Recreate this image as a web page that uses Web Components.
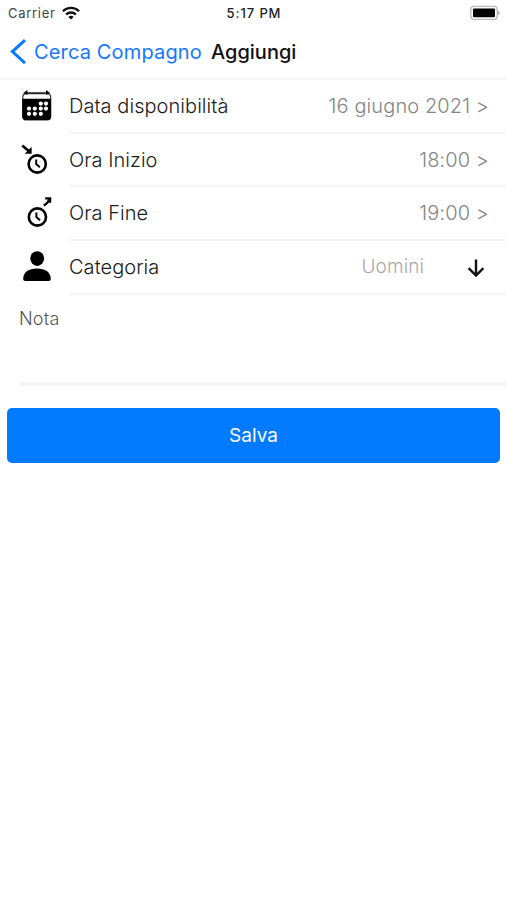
<!DOCTYPE html>
<html lang="it">
<head>
    <meta charset="utf-8">
    <title>Aggiungi</title>
    <style>
        body {
            margin: 0;
            background: #fff;
            color: #202020;
            font-family: Inter, "Liberation Sans", sans-serif;
            font-feature-settings: "calt" 0;
        }
    </style>
</head>
<body>
    <add-page></add-page>

    <script>
        class StatusBar extends HTMLElement {
            constructor() {
                super();
                this.shadowDOM = this.attachShadow({ mode: "open" });
            }

            connectedCallback() {
                this.render();
            }

            render() {
                this.shadowDOM.innerHTML = `
                    <style>
                        :host {
                            display: grid;
                            grid-template-columns: 1fr auto 1fr;
                            align-items: center;
                            height: 26px;
                            padding: 0 6px 0 8px;
                            font-size: 13px;
                            line-height: 26px;
                        }

                        .carrier {
                            display: flex;
                            align-items: center;
                            gap: 6px;
                            color: #444;
                            letter-spacing: 0.7px;
                        }

                        .time {
                            font-weight: 500;
                            color: #222;
                            letter-spacing: 0.9px;
                        }

                        .battery {
                            justify-self: end;
                        }

                        svg {
                            display: block;
                        }
                    </style>

                    <div class="carrier">
                        <span>Carrier</span>
                        <svg width="18" height="14" viewBox="0 0 18 14" fill="none" stroke="#111" stroke-width="2.3">
                            <path d="M.9 5.2a11.6 11.6 0 0 1 16.2 0M4 8.5a7.3 7.3 0 0 1 10 0" />
                            <path d="M9 13.4 6.3 10.9a4 4 0 0 1 5.4 0z" fill="#111" stroke="none" />
                        </svg>
                    </div>
                    <span class="time">5:17 PM</span>
                    <svg class="battery" width="30" height="16" viewBox="0 0 30 16">
                        <rect x=".8" y="1.4" width="26.4" height="13" rx="3" fill="#fff" stroke="#bbb" stroke-width="1.4" />
                        <rect x="3" y="3.6" width="22" height="8.6" rx="1" fill="#000" />
                        <path d="M28.2 5.6q1.4.5 1.4 2.3t-1.4 2.3z" fill="#aaa" />
                    </svg>
                `;
            }
        }

        class NavBar extends HTMLElement {
            constructor() {
                super();
                this.shadowDOM = this.attachShadow({ mode: "open" });
            }

            connectedCallback() {
                this.render();
            }

            render() {
                this.shadowDOM.innerHTML = `
                    <style>
                        :host {
                            display: flex;
                            align-items: center;
                            box-sizing: border-box;
                            height: 54px;
                            padding-left: 10px;
                            border-bottom: 2px solid #f6f6f6;
                            font-size: 20px;
                            line-height: 52px;
                            white-space: nowrap;
                        }

                        svg {
                            flex: none;
                            margin-right: 8px;
                        }

                        .back {
                            color: #1677ff;
                            width: 177px;
                            letter-spacing: 0.15px;
                        }

                        .title {
                            color: #111;
                            font-weight: 500;
                            letter-spacing: 0;
                        }
                    </style>

                    <svg width="16" height="26" viewBox="0 0 16 26" fill="none" stroke="#0a78ff" stroke-width="3">
                        <path d="M15 1.2 2.4 12.6 15 24.2" />
                    </svg>
                    <span class="back"><slot name="back"></slot></span>
                    <span class="title"><slot></slot></span>
                `;
            }
        }

        const clock = `
            <circle r="8.6" fill="none" stroke="#000" stroke-width="2.6" />
            <path d="M-1-4.6V0L2.6 3.2" fill="none" stroke="#000" stroke-width="1.9" />
        `;

        // 32x53 drawings, one row high
        const icons = {
            calendar: `
                <rect x="2.8" y="13.6" width="27.8" height="26.4" rx="3.4" fill="none" stroke="#333" stroke-width="1.2" />
                <path d="M2.3 18.8h28.8v17.8a3.4 3.4 0 0 1-3.4 3.4h-22a3.4 3.4 0 0 1-3.4-3.4z" />
                <path d="M5 12.9h23.4" stroke="#222" stroke-width="1.3" />
                <path d="M3.2 12.9 7.4 10v5zM30.2 12.9 26 10v5z" />
                <g fill="#fff">
                    <circle cx="20.8" cy="23.6" r="2.1" /><circle cx="26" cy="23.6" r="2.1" />
                    <circle cx="9" cy="28.6" r="2.1" /><circle cx="14.8" cy="28.6" r="2.1" />
                    <circle cx="20.8" cy="28.6" r="2.1" /><circle cx="26" cy="28.6" r="2.1" />
                    <circle cx="9" cy="33.8" r="2.1" /><circle cx="14.8" cy="33.8" r="2.1" />
                    <circle cx="20.8" cy="33.8" r="2.1" />
                </g>
            `,
            start: `
                <path d="M2.2 11.4 9.6 17.8" fill="none" stroke="#000" stroke-width="2.6" />
                <path d="M11.6 13v6.8H4.6z" />
                <g transform="translate(17.2 30)">${clock}</g>
            `,
            end: `
                <path d="M23.8 18.6q5-3 5.4-7.2M25.2 11.4h4.9v4.4" fill="none" stroke="#000" stroke-width="2.3" />
                <g transform="translate(17.4 30)">${clock}</g>
            `,
            person: `
                <ellipse cx="17.2" cy="17.6" rx="6.9" ry="7.4" />
                <path d="M3.2 38.2C3.2 31 9 27.6 17 27.6s13.8 3.4 13.8 10.6q0 1.8-2 1.8H5.2q-2 0-2-1.8z" />
            `
        };

        class FormRow extends HTMLElement {
            constructor() {
                super();
                this.shadowDOM = this.attachShadow({ mode: "open" });
            }

            connectedCallback() {
                this.render();
            }

            render() {
                this.shadowDOM.innerHTML = `
                    <style>
                        :host {
                            display: flex;
                            height: 53.7px;
                            padding-left: 20px;
                            font-size: 20px;
                            font-weight: 300;
                            line-height: 53px;
                            white-space: nowrap;
                        }

                        .icon {
                            flex: none;
                            margin-right: 17px;
                        }

                        .content {
                            flex: 1;
                            display: flex;
                            justify-content: space-between;
                            box-sizing: border-box;
                            padding-right: 17px;
                            border-bottom: 2px solid #f4f4f4;
                        }

                        .label {
                            letter-spacing: 0.05px;
                        }

                        .value {
                            display: flex;
                            color: #858585;
                            letter-spacing: 0.1px;
                        }
                    </style>

                    <svg class="icon" width="32" height="53" viewBox="0 0 32 53">${icons[this.getAttribute("icon")]}</svg>
                    <div class="content">
                        <span class="label"><slot name="label"></slot></span>
                        <span class="value"><slot></slot></span>
                    </div>
                `;
            }
        }

        class CategoryPicker extends HTMLElement {
            constructor() {
                super();
                this.shadowDOM = this.attachShadow({ mode: "open" });
            }

            connectedCallback() {
                this.render();
            }

            render() {
                this.shadowDOM.innerHTML = `
                    <style>
                        :host {
                            display: flex;
                            align-items: center;
                            gap: 43px;
                            padding-right: 4px;
                            color: #a8a8a8;
                            font-size: 19px;
                        }

                        svg {
                            margin-top: 3px;
                        }
                    </style>

                    <span><slot></slot></span>
                    <svg width="18" height="20" viewBox="0 0 18 20" fill="none" stroke="#111" stroke-width="2.4">
                        <path d="M9 1.6v16M1.6 10.2 9 17.6l7.4-7.4" />
                    </svg>
                `;
            }
        }

        class NoteField extends HTMLElement {
            constructor() {
                super();
                this.shadowDOM = this.attachShadow({ mode: "open" });
            }

            connectedCallback() {
                this.render();
            }

            render() {
                this.shadowDOM.innerHTML = `
                    <style>
                        :host {
                            display: block;
                            box-sizing: border-box;
                            height: 91px;
                            margin-left: 19px;
                            padding-top: 12px;
                            border-bottom: 4px solid #f5f5f5;
                            color: #555;
                            font-size: 18px;
                            font-weight: 300;
                            line-height: 24px;
                            letter-spacing: 0.2px;
                        }
                    </style>

                    <slot></slot>
                `;
            }
        }

        class SaveButton extends HTMLElement {
            constructor() {
                super();
                this.shadowDOM = this.attachShadow({ mode: "open" });
            }

            connectedCallback() {
                this.render();
            }

            render() {
                this.shadowDOM.innerHTML = `
                    <style>
                        :host {
                            display: block;
                            margin: 22px 6px 0 7px;
                        }

                        button {
                            display: block;
                            width: 100%;
                            height: 55px;
                            padding: 1px 0 0;
                            border: none;
                            border-radius: 5px;
                            background-color: #007aff;
                            color: white;
                            font: 400 19px/54px Inter, sans-serif;
                        }
                    </style>

                    <button type="submit"><slot></slot></button>
                `;
            }
        }

        class AddPage extends HTMLElement {
            constructor() {
                super();
                this.shadowDOM = this.attachShadow({ mode: "open" });
            }

            connectedCallback() {
                this.render();
            }

            render() {
                this.shadowDOM.innerHTML = `
                    <style>
                        :host {
                            display: block;
                            min-height: 900px;
                        }
                    </style>

                    <status-bar></status-bar>
                    <nav-bar><span slot="back">Cerca Compagno</span>Aggiungi</nav-bar>
                    <form-row icon="calendar"><span slot="label">Data disponibilità</span>16 giugno 2021 &gt;</form-row>
                    <form-row icon="start"><span slot="label">Ora Inizio</span>18:00 &gt;</form-row>
                    <form-row icon="end"><span slot="label">Ora Fine</span>19:00 &gt;</form-row>
                    <form-row icon="person">
                        <span slot="label">Categoria</span><category-picker>Uomini</category-picker>
                    </form-row>
                    <note-field>Nota</note-field>
                    <save-button>Salva</save-button>
                `;
            }
        }

        customElements.define("status-bar", StatusBar);
        customElements.define("nav-bar", NavBar);
        customElements.define("form-row", FormRow);
        customElements.define("category-picker", CategoryPicker);
        customElements.define("note-field", NoteField);
        customElements.define("save-button", SaveButton);
        customElements.define("add-page", AddPage);
    </script>
</body>
</html>
